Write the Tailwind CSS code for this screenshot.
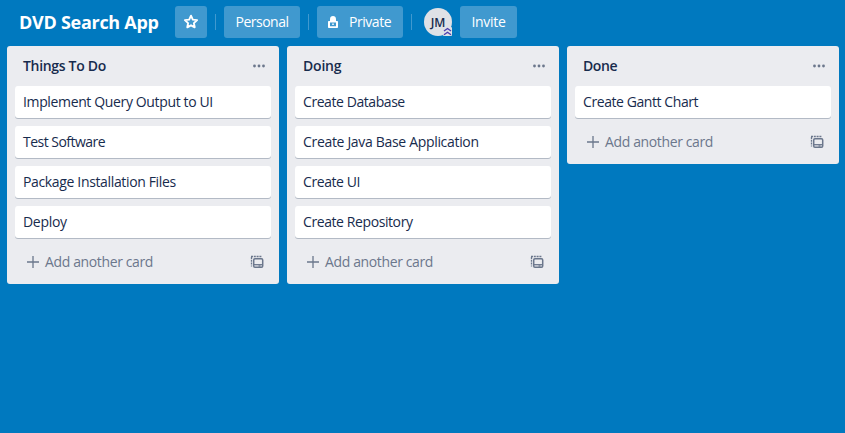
<!DOCTYPE html>
<html lang="en">
<head>
<meta charset="utf-8">
<title>DVD Search App</title>
<script src="https://cdn.jsdelivr.net/npm/@tailwindcss/browser@4"></script>
</head>
<body class="h-[433px] overflow-hidden bg-[#0079bf] font-['Open_Sans','Noto_Sans',sans-serif] text-sm leading-5 text-[#172b4d]">
<svg class="hidden">
  <symbol id="dots" viewBox="0 0 14 4"><g fill="#6b778c"><circle cx="2.5" cy="2" r="1.4"/><circle cx="7" cy="2" r="1.4"/><circle cx="11.5" cy="2" r="1.4"/></g></symbol>
  <symbol id="plus" viewBox="0 0 12 12"><path d="M6 0v12M0 6h12" stroke="#6b778c" stroke-width="1.3" fill="none"/></symbol>
  <symbol id="template" viewBox="0 0 14 14"><g fill="none" stroke="#6b778c"><path d="M1 1.500H11.500" stroke-width="1.300" stroke-dasharray="2 .8"/><path d="M1.500 2V11.500" stroke-width="1.300" stroke-dasharray="2 .8"/><rect x="3.700" y="3.700" width="9" height="8.600" rx="1.200" stroke-width="1.500"/><path d="M4 9.700H12.500" stroke-width="1.300"/><path d="M8.500 11h2" stroke-width="1.300"/></g></symbol>
</svg>
<header class="flex h-[46px] items-start pt-1.5 pl-[19px] text-white">
  <h1 class="w-[156px] whitespace-nowrap text-lg leading-8 font-bold tracking-[-0.28px]">DVD Search App</h1>
  <button class="flex size-8 items-center justify-center rounded-[3px] bg-[#4099cf]">
    <svg class="size-4" viewBox="0 0 16 16" fill="none" stroke="white" stroke-width="1.9" stroke-linejoin="round"><path d="M8 1.700l1.800 3.900 4.300.5-3.200 3 .8 4.200L8 11.300l-3.700 2 .8-4.200-3.200-3 4.300-.5z"/></svg>
  </button>
  <span class="mt-2 ml-2 h-4 w-px bg-[#4099cf]"></span>
  <button class="ml-2 h-8 w-[76px] rounded-[3px] bg-[#4099cf]"><span class="tracking-[-0.5px]">Personal</span></button>
  <span class="mt-2 ml-2 h-4 w-px bg-[#4099cf]"></span>
  <button class="ml-2 flex h-8 w-[86px] items-center rounded-[3px] bg-[#4099cf] pl-[11px]">
    <svg class="mr-[11px] h-3 w-2.5" viewBox="0 0 10 12"><path fill="white" fill-rule="evenodd" d="M2 5V3.2C2 1.2 3.2 0 5 0s3 1.2 3 3.2V5h1.2c.5 0 .8.3.8.8v5.4c0 .5-.3.8-.8.8H.8c-.5 0-.8-.3-.8-.8V5.800C0 5.300.3 5 .8 5zM2 6.500v3.800h6V6.500z"/><path fill="white" d="M4.200 7.500h1.600v1.600H4.200z"/></svg>
    <span class="tracking-[-0.45px]">Private</span>
  </button>
  <span class="mt-2 ml-2 h-4 w-px bg-[#4099cf]"></span>
  <div class="relative mt-0.5 ml-3 flex size-7 items-center justify-center rounded-full bg-[#dfe1e6] pt-0.5 text-xs font-semibold text-[#172b4d]">JM
    <svg class="absolute right-0 bottom-0 size-[9px]" viewBox="0 0 9 9"><rect width="9" height="9" rx="1" fill="#dfe1e6"/><path d="M1 4l3.500-2.500L8 4M1 7.800l3.500-2.500L8 7.800" fill="none" stroke="#4c3fae" stroke-width="1.400"/></svg>
  </div>
  <button class="ml-2 h-8 w-[57px] rounded-[3px] bg-[#4099cf]"><span class="tracking-[-0.3px]">Invite</span></button>
</header>
<main class="flex items-start gap-2 pl-[7px]">
  <section class="w-[272px] shrink-0 rounded-[3px] bg-[#ebecf0] px-2 pb-1.5">
    <div class="flex h-10 items-center justify-between px-2 pr-[5px]"><h2 class="font-semibold tracking-[-0.32px]">Things To Do</h2><svg class="h-1 w-3.5"><use href="#dots"/></svg></div>
    <ul class="flex flex-col gap-2 whitespace-nowrap">
      <li class="h-8 rounded-[3px] bg-white px-2 py-1.5 tracking-[-0.36px] shadow-[0_1px_0_#b3bac5]">Implement Query Output to UI</li>
      <li class="h-8 rounded-[3px] bg-white px-2 py-1.5 tracking-[-0.52px] shadow-[0_1px_0_#b3bac5]">Test Software</li>
      <li class="h-8 rounded-[3px] bg-white px-2 py-1.5 tracking-[-0.35px] shadow-[0_1px_0_#b3bac5]">Package Installation Files</li>
      <li class="h-8 rounded-[3px] bg-white px-2 py-1.5 tracking-[-0.3px] shadow-[0_1px_0_#b3bac5]">Deploy</li>
    </ul>
    <div class="mt-2 flex h-8 items-center pr-[7px] pl-3 text-[#6b778c]"><svg class="mr-1.5 size-3"><use href="#plus"/></svg><span class="tracking-[-0.37px]">Add another card</span><svg class="ml-auto size-3.5"><use href="#template"/></svg></div>
  </section>
  <section class="w-[272px] shrink-0 rounded-[3px] bg-[#ebecf0] px-2 pb-1.5">
    <div class="flex h-10 items-center justify-between px-2 pr-[5px]"><h2 class="font-semibold tracking-[-0.2px]">Doing</h2><svg class="h-1 w-3.5"><use href="#dots"/></svg></div>
    <ul class="flex flex-col gap-2 whitespace-nowrap">
      <li class="h-8 rounded-[3px] bg-white px-2 py-1.5 tracking-[-0.43px] shadow-[0_1px_0_#b3bac5]">Create Database</li>
      <li class="h-8 rounded-[3px] bg-white px-2 py-1.5 tracking-[-0.32px] shadow-[0_1px_0_#b3bac5]">Create Java Base Application</li>
      <li class="h-8 rounded-[3px] bg-white px-2 py-1.5 tracking-[-0.42px] shadow-[0_1px_0_#b3bac5]">Create UI</li>
      <li class="h-8 rounded-[3px] bg-white px-2 py-1.5 tracking-[-0.41px] shadow-[0_1px_0_#b3bac5]">Create Repository</li>
    </ul>
    <div class="mt-2 flex h-8 items-center pr-[7px] pl-3 text-[#6b778c]"><svg class="mr-1.5 size-3"><use href="#plus"/></svg><span class="tracking-[-0.37px]">Add another card</span><svg class="ml-auto size-3.5"><use href="#template"/></svg></div>
  </section>
  <section class="w-[272px] shrink-0 rounded-[3px] bg-[#ebecf0] px-2 pb-1.5">
    <div class="flex h-10 items-center justify-between px-2 pr-[5px]"><h2 class="font-semibold tracking-[-0.4px]">Done</h2><svg class="h-1 w-3.5"><use href="#dots"/></svg></div>
    <ul class="flex flex-col gap-2 whitespace-nowrap">
      <li class="h-8 rounded-[3px] bg-white px-2 py-1.5 tracking-[-0.42px] shadow-[0_1px_0_#b3bac5]">Create Gantt Chart</li>
    </ul>
    <div class="mt-2 flex h-8 items-center pr-[7px] pl-3 text-[#6b778c]"><svg class="mr-1.5 size-3"><use href="#plus"/></svg><span class="tracking-[-0.37px]">Add another card</span><svg class="ml-auto size-3.5"><use href="#template"/></svg></div>
  </section>
</main>
</body>
</html>
